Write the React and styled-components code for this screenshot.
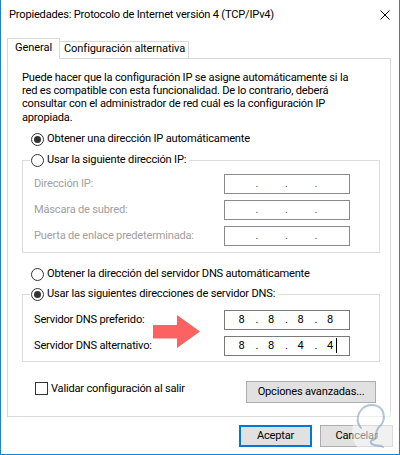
import React from "react";
import styled, { createGlobalStyle } from "styled-components";

const GlobalStyle = createGlobalStyle`
  html, body { margin: 0; padding: 0; background: #fff; }
  *, *::before, *::after { box-sizing: border-box; }
`;

const Window = styled.div`
  position: relative;
  width: 400px;
  height: 455px;
  border: 1px solid #1883d7;
  border-top: none;
  background: #fff;
  display: flex;
  flex-direction: column;
  font-family: Roboto, "Noto Sans", sans-serif;
  font-size: 11.1px;
  letter-spacing: -0.2px;
  color: #000;
  overflow: hidden;
`;

const TitleBar = styled.div`
  height: 30px;
  display: flex;
  align-items: center;
  padding: 0 9px 0 8px;
`;

const Title = styled.div`
  flex: 1;
  line-height: 13px;
  margin-bottom: 1px;
  white-space: nowrap;
`;

const CloseIcon = styled.svg`
  width: 10px;
  height: 10px;
  flex: none;
  margin-bottom: 1px;
`;

const TabRow = styled.div`
  display: flex;
  align-items: flex-end;
  height: 20px;
  margin: 8px 0 0 6px;
`;

const Tab = styled.div`
  position: relative;
  white-space: nowrap;
  background: #fff;
  border: 1px solid #d9d9d9;
  border-bottom: none;
  letter-spacing: -0.1px;
  ${(p) =>
    p.$active
      ? `
    z-index: 1;
    width: 53px;
    height: 21px;
    margin-bottom: -1px;
    padding-left: 7px;
    line-height: 17px;
  `
      : `
    border-left: none;
    width: 129px;
    height: 17px;
    padding-left: 4px;
    line-height: 14px;
  `}
`;

const Panel = styled.div`
  margin-left: 6px;
  width: 384px;
  height: 359px;
  border: 1px solid #d9d9d9;
  display: flex;
  flex-direction: column;
`;

const Intro = styled.div`
  margin: 11.8px 0 0 14px;
  line-height: 13.3px;
`;

const IntroLine = styled.div`
  white-space: nowrap;
`;

const Caption = styled.span`
  display: block;
  white-space: nowrap;
  line-height: 13px;
  margin-bottom: 2px;
  color: ${(p) => (p.$disabled ? "#a0a0a0" : "#000")};
`;

const OptionRow = styled.div`
  display: flex;
  align-items: center;
  gap: 3px;
  height: 16px;
  margin: ${(p) => p.$top}px 0 0 23px;
`;

const Radio = styled.span`
  flex: none;
  width: 13px;
  height: 13px;
  border-radius: 50%;
  border: 1px solid #333;
  background: #fff;
  display: flex;
  align-items: center;
  justify-content: center;
  &::after {
    content: "";
    width: 7px;
    height: 7px;
    border-radius: 50%;
    background: ${(p) => (p.$checked ? "#333" : "transparent")};
  }
`;

const Group = styled.fieldset`
  margin: ${(p) => p.$top}px 0 0 14px;
  width: 358px;
  min-width: 0;
  border: 1px solid #dcdcdc;
  padding: ${(p) => p.$padTop}px 0 ${(p) => p.$padBottom}px 0;
`;

const Legend = styled.legend`
  margin-left: 7px;
  padding: 0 3px 0 1px;
  height: 16px;
  display: flex;
  align-items: center;
  gap: 3px;
`;

const Rows = styled.div`
  display: flex;
  flex-direction: column;
  gap: 6px;
  padding-left: 11px;
`;

const FieldRow = styled.div`
  display: flex;
  align-items: center;
  height: 20px;
`;

const FieldLabel = styled.div`
  width: 190px;
  flex: none;
`;

const IpBox = styled.div`
  width: 126px;
  height: 20px;
  border: 1px solid ${(p) => (p.$disabled ? "#8a8a8a" : "#7a7a7a")};
  background: #fff;
  display: flex;
  align-items: flex-start;
  padding-left: 5px;
  line-height: 17px;
  letter-spacing: 0;
`;

const Octet = styled.span`
  position: relative;
  width: 23px;
  text-align: center;
`;

const Dot = styled.span`
  width: 6.5px;
  text-align: center;
  padding-left: 1.5px;
  color: ${(p) => (p.$disabled ? "#555" : "#000")};
`;

const Caret = styled.span`
  position: absolute;
  left: 17px;
  top: 1px;
  width: 1px;
  height: 15px;
  background: #000;
`;

const BottomRow = styled.div`
  display: flex;
  justify-content: space-between;
  align-items: center;
  height: 22px;
  margin: 19px 14px 0 27px;
`;

const CheckGroup = styled.label`
  align-self: flex-start;
  margin-top: 1px;
  display: flex;
  align-items: flex-start;
  gap: 3px;
`;

const CheckBox = styled.span`
  flex: none;
  width: 13px;
  height: 13px;
  border: 1px solid #333;
  background: #fff;
`;

const Button = styled.button`
  height: 22px;
  width: ${(p) => p.$width}px;
  padding: 0 0 2px;
  font: inherit;
  letter-spacing: inherit;
  color: #000;
  background: #e1e1e1;
  border: ${(p) => (p.$default ? "2px solid #0078d7" : "1px solid #adadad")};
  line-height: 13px;
`;

const Footer = styled.div`
  display: flex;
  justify-content: flex-end;
  gap: 8px;
  margin: 8px 6px 0 0;
`;

const ArrowSvg = styled.svg`
  position: absolute;
  left: 149px;
  top: 312px;
  width: 54px;
  height: 40px;
`;

const Watermark = styled.svg`
  position: absolute;
  right: 0;
  bottom: 0;
  width: 60px;
  height: 62px;
  pointer-events: none;
`;

function IpField({ values, disabled, caret }) {
  const cells = values || ["", "", "", ""];
  return (
    <IpBox $disabled={disabled}>
      {cells.map((v, i) => (
        <React.Fragment key={i}>
          <Octet>
            {v}
            {caret && i === 3 && <Caret />}
          </Octet>
          {i < 3 && <Dot $disabled={disabled}>.</Dot>}
        </React.Fragment>
      ))}
    </IpBox>
  );
}

export default function App() {
  return (
    <>
      <GlobalStyle />
      <Window>
        <TitleBar>
          <Title>Propiedades: Protocolo de Internet versión 4 (TCP/IPv4)</Title>
          <CloseIcon viewBox="0 0 10 10">
            <path d="M0.5 0.5 L9.5 9.5 M9.5 0.5 L0.5 9.5" stroke="#000" strokeWidth="1" fill="none" />
          </CloseIcon>
        </TitleBar>

        <TabRow>
          <Tab $active>General</Tab>
          <Tab>Configuración alternativa</Tab>
        </TabRow>

        <Panel>
          <Intro>
            <IntroLine>Puede hacer que la configuración IP se asigne automáticamente si la</IntroLine>
            <IntroLine>red es compatible con esta funcionalidad. De lo contrario, deberá</IntroLine>
            <IntroLine>consultar con el administrador de red cuál es la configuración IP</IntroLine>
            <IntroLine>apropiada.</IntroLine>
          </Intro>

          <OptionRow $top={7.5}>
            <Radio $checked />
            <Caption>Obtener una dirección IP automáticamente</Caption>
          </OptionRow>

          <Group $top={5} $padTop={6} $padBottom={6}>
            <Legend>
              <Radio />
              <Caption>Usar la siguiente dirección IP:</Caption>
            </Legend>
            <Rows>
              <FieldRow>
                <FieldLabel><Caption $disabled>Dirección IP:</Caption></FieldLabel>
                <IpField disabled />
              </FieldRow>
              <FieldRow>
                <FieldLabel><Caption $disabled>Máscara de subred:</Caption></FieldLabel>
                <IpField disabled />
              </FieldRow>
              <FieldRow>
                <FieldLabel><Caption $disabled>Puerta de enlace predeterminada:</Caption></FieldLabel>
                <IpField disabled />
              </FieldRow>
            </Rows>
          </Group>

          <OptionRow $top={13}>
            <Radio />
            <Caption>Obtener la dirección del servidor DNS automáticamente</Caption>
          </OptionRow>

          <Group $top={4} $padTop={8} $padBottom={5}>
            <Legend>
              <Radio $checked />
              <Caption>Usar las siguientes direcciones de servidor DNS:</Caption>
            </Legend>
            <Rows>
              <FieldRow>
                <FieldLabel><Caption>Servidor DNS preferido:</Caption></FieldLabel>
                <IpField values={["8", "8", "8", "8"]} />
              </FieldRow>
              <FieldRow>
                <FieldLabel><Caption>Servidor DNS alternativo:</Caption></FieldLabel>
                <IpField values={["8", "8", "4", "4"]} caret />
              </FieldRow>
            </Rows>
          </Group>

          <BottomRow>
            <CheckGroup>
              <CheckBox />
              <Caption>Validar configuración al salir</Caption>
            </CheckGroup>
            <Button $width={130}>Opciones avanzadas...</Button>
          </BottomRow>
        </Panel>

        <Footer>
          <Button $width={73} $default>Aceptar</Button>
          <Button $width={73}>Cancelar</Button>
        </Footer>

        <ArrowSvg viewBox="0 0 54 40">
          <defs>
            <filter id="soft" x="-20%" y="-20%" width="140%" height="140%">
              <feGaussianBlur stdDeviation="0.6" />
            </filter>
          </defs>
          <polygon
            points="3,13 27,13 27,3 50,19.5 27,36 27,26.5 3,26.5"
            fill="#fc6262"
            filter="url(#soft)"
          />
        </ArrowSvg>

        <Watermark viewBox="0 0 60 62">
          <circle cx="38" cy="40" r="25" fill="rgba(255,255,255,0.55)" />
          <path
            d="M22 36 C14 26 22 12 34 13 C46 14 48 28 40 35 C37 38 37 41 38 44 C39 48 30 47 32 51 C34 55 42 52 44 55"
            fill="none"
            stroke="rgba(110,150,190,0.55)"
            strokeWidth="2"
            strokeLinecap="round"
          />
        </Watermark>
      </Window>
    </>
  );
}
